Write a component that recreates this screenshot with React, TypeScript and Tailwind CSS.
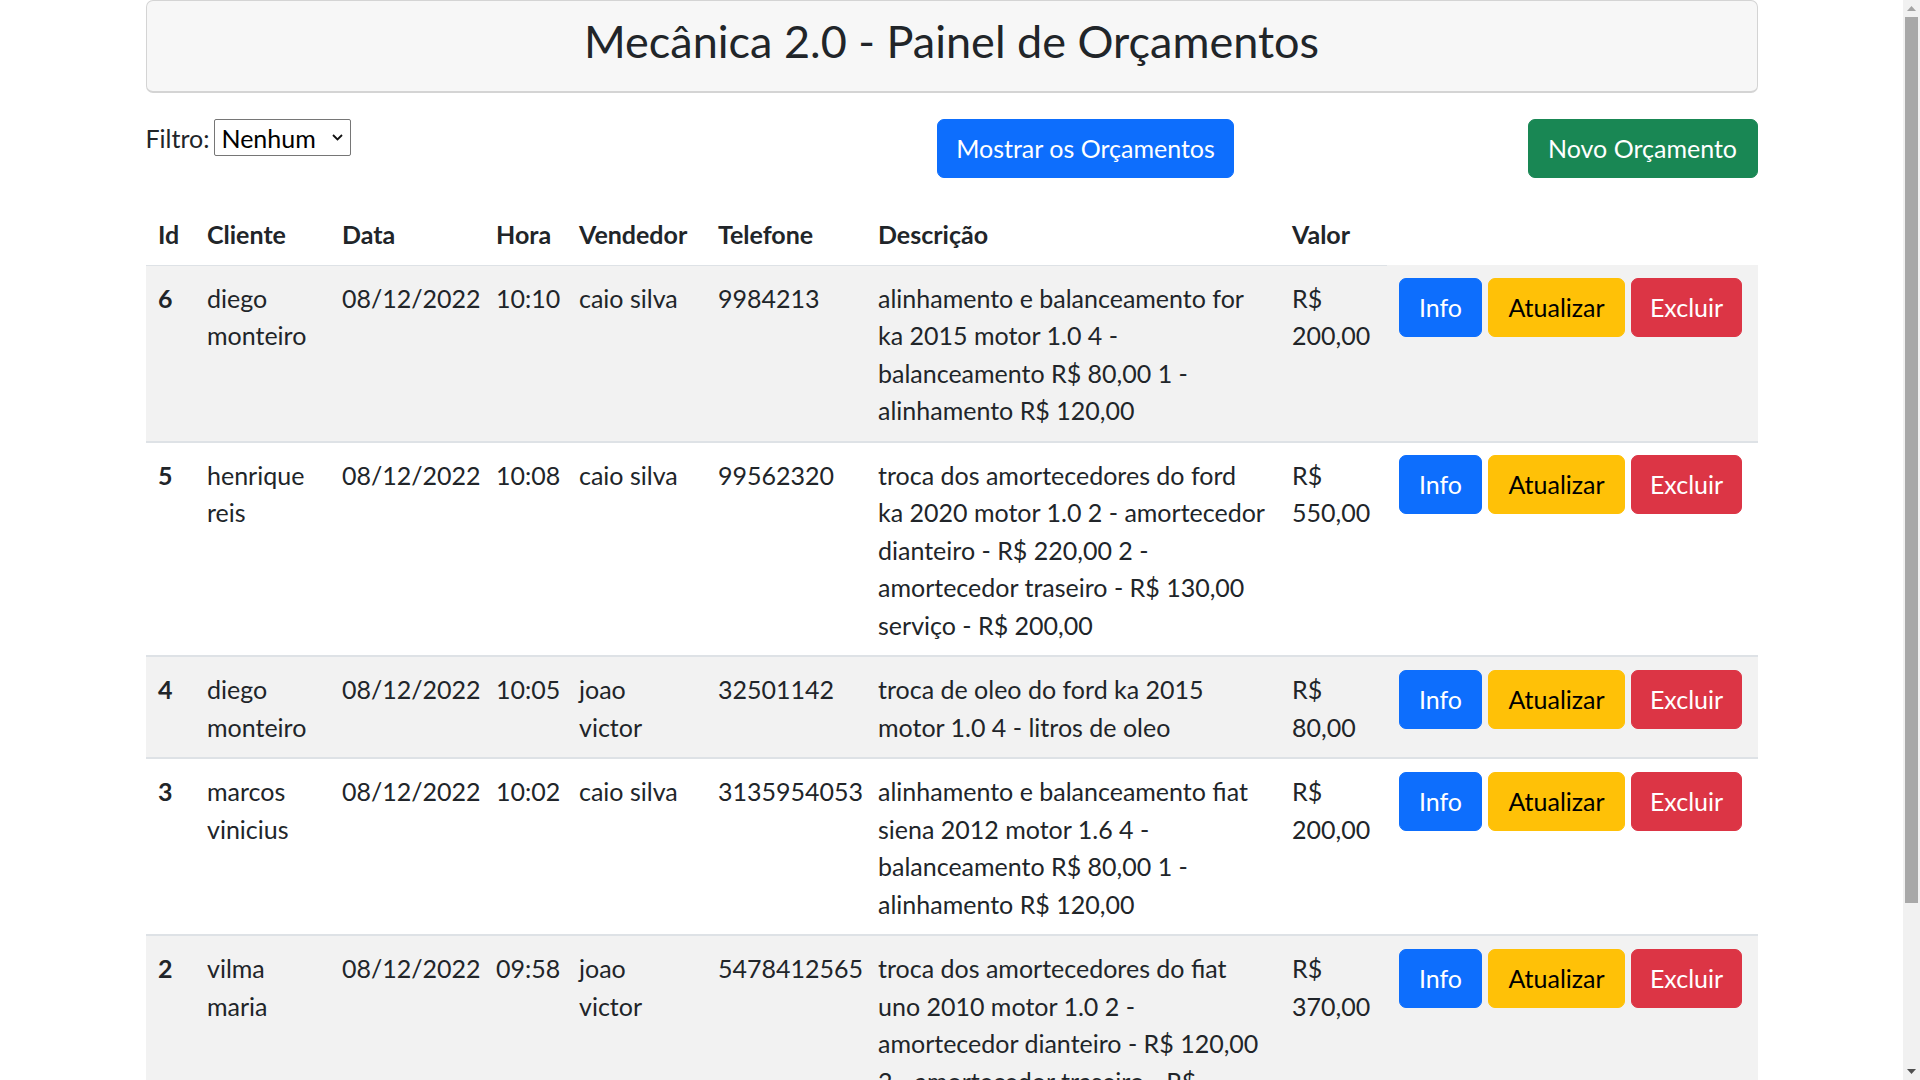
type Orcamento = {
  id: number;
  cliente: string[];
  data: string;
  hora: string;
  vendedor: string[];
  telefone: string;
  descricao: string[];
  valor: string;
};

const orcamentos: Orcamento[] = [
  {
    id: 6,
    cliente: ['diego', 'monteiro'],
    data: '08/12/2022',
    hora: '10:10',
    vendedor: ['caio silva'],
    telefone: '9984213',
    descricao: [
      'alinhamento e balanceamento for',
      'ka 2015 motor 1.0 4 -',
      'balanceamento R$ 80,00 1 -',
      'alinhamento R$ 120,00',
    ],
    valor: '200,00',
  },
  {
    id: 5,
    cliente: ['henrique', 'reis'],
    data: '08/12/2022',
    hora: '10:08',
    vendedor: ['caio silva'],
    telefone: '99562320',
    descricao: [
      'troca dos amortecedores do ford',
      'ka 2020 motor 1.0 2 - amortecedor',
      'dianteiro - R$ 220,00 2 -',
      'amortecedor traseiro - R$ 130,00',
      'serviço - R$ 200,00',
    ],
    valor: '550,00',
  },
  {
    id: 4,
    cliente: ['diego', 'monteiro'],
    data: '08/12/2022',
    hora: '10:05',
    vendedor: ['joao', 'victor'],
    telefone: '32501142',
    descricao: ['troca de oleo do ford ka 2015', 'motor 1.0 4 - litros de oleo'],
    valor: '80,00',
  },
  {
    id: 3,
    cliente: ['marcos', 'vinicius'],
    data: '08/12/2022',
    hora: '10:02',
    vendedor: ['caio silva'],
    telefone: '3135954053',
    descricao: [
      'alinhamento e balanceamento fiat',
      'siena 2012 motor 1.6 4 -',
      'balanceamento R$ 80,00 1 -',
      'alinhamento R$ 120,00',
    ],
    valor: '200,00',
  },
  {
    id: 2,
    cliente: ['vilma', 'maria'],
    data: '08/12/2022',
    hora: '09:58',
    vendedor: ['joao', 'victor'],
    telefone: '5478412565',
    descricao: [
      'troca dos amortecedores do fiat',
      'uno 2010 motor 1.0 2 -',
      'amortecedor dianteiro - R$ 120,00',
      '2 - amortecedor traseiro - R$',
      '100,00 serviço - R$ 150,00',
    ],
    valor: '370,00',
  },
  {
    id: 1,
    cliente: ['ana', 'souza'],
    data: '08/12/2022',
    hora: '09:51',
    vendedor: ['caio silva'],
    telefone: '988776655',
    descricao: ['troca de pastilhas de freio do', 'gol 2018 - R$ 150,00'],
    valor: '150,00',
  },
];

const headers = ['Id', 'Cliente', 'Data', 'Hora', 'Vendedor', 'Telefone', 'Descrição', 'Valor'];

// text cells sit a little lower than the buttons, as in the original font
const cell = 'border-b-2 border-[#dee2e6] px-[12.5px] pt-[14px] pb-[11px] align-top';

function Lines({ lines }: { lines: string[] }) {
  return (
    <>
      {lines.map((line, i) => (
        <div key={i} className="whitespace-nowrap">
          {line}
        </div>
      ))}
    </>
  );
}

function Scrollbar() {
  return (
    <div className="flex h-screen w-[17px] shrink-0 flex-col bg-[#f1f1f1]">
      <div className="flex h-[17px] items-center justify-center">
        <svg width="9" height="5" viewBox="0 0 9 5">
          <path d="M0 5L4.5 0L9 5Z" fill="#a3a3a3" />
        </svg>
      </div>
      <div className="flex-1">
        <div className="mx-[2px] h-[886px] bg-[#a8a8a8]" />
      </div>
      <div className="flex h-[17px] items-center justify-center">
        <svg width="9" height="5" viewBox="0 0 9 5">
          <path d="M0 0L4.5 5L9 0Z" fill="#505050" />
        </svg>
      </div>
    </div>
  );
}

export default function App() {
  return (
    <div className="flex h-screen overflow-hidden bg-white font-[Lato,sans-serif] text-[25px] leading-[37.5px] text-[#212529]">
      <main className="h-screen flex-1 overflow-y-auto [scrollbar-width:none]">
        <div className="mx-auto w-[1612px] pb-[25px]">
          {/* Cabeçalho */}
          <header className="rounded-[7px] border border-b-2 border-[#d4d4d4] bg-[#f7f7f7] pt-[10px] pb-[20px] text-center">
            <h2 className="text-[45px] font-normal leading-[60px]">Mecânica 2.0 - Painel de Orçamentos</h2>
          </header>

          {/* Filtro e ações */}
          <div className="mt-[26px] flex items-start justify-between">
            <div className="flex w-[498px] items-start gap-[5px]">
              <label htmlFor="filtro" className="pt-[1px]">
                Filtro:
              </label>
              <div className="relative">
                <select
                  id="filtro"
                  className="h-[37px] w-[137px] appearance-none rounded-[2px] border border-[#767676] bg-white pl-[6px] text-[25px] leading-[normal] text-black"
                >
                  <option>Nenhum</option>
                </select>
                <svg
                  className="pointer-events-none absolute right-[8px] top-[15px]"
                  width="11"
                  height="7"
                  viewBox="0 0 11 7"
                  fill="none"
                >
                  <path d="M1 1l4.5 4.5L10 1" stroke="#111" strokeWidth="1.8" />
                </svg>
              </div>
            </div>
            <button className="flex h-[59px] w-[297px] items-center justify-center rounded-[7px] border border-[#0d6efd] bg-[#0d6efd] pt-[1px] text-white">
              Mostrar os Orçamentos
            </button>
            <button className="flex h-[59px] w-[230px] items-center justify-center rounded-[7px] border border-[#198754] bg-[#198754] pt-[1px] text-white">
              Novo Orçamento
            </button>
          </div>

          {/* Tabela */}
          <table className="mt-[24px] w-full table-fixed border-collapse">
            <colgroup>
              <col className="w-[49px]" />
              <col className="w-[135px]" />
              <col className="w-[154px]" />
              <col className="w-[83px]" />
              <col className="w-[139px]" />
              <col className="w-[160px]" />
              <col className="w-[414px]" />
              <col className="w-[107px]" />
              <col className="w-[371px]" />
            </colgroup>
            <thead>
              <tr>
                {headers.map((h) => (
                  <th
                    key={h}
                    className="border-b border-[#dee2e6] px-[12.5px] pt-[14px] pb-[11px] text-left align-bottom font-bold"
                  >
                    {h}
                  </th>
                ))}
              </tr>
            </thead>
            <tbody>
              {orcamentos.map((o, index) => (
                <tr key={o.id} className={index % 2 === 0 ? 'bg-[#f2f2f2]' : 'bg-white'}>
                  <td className={`${cell} font-bold`}>{o.id}</td>
                  <td className={cell}>
                    <Lines lines={o.cliente} />
                  </td>
                  <td className={cell}>{o.data}</td>
                  <td className={cell}>{o.hora}</td>
                  <td className={cell}>
                    <Lines lines={o.vendedor} />
                  </td>
                  <td className={`${cell} whitespace-nowrap`}>{o.telefone}</td>
                  <td className={cell}>
                    <Lines lines={o.descricao} />
                  </td>
                  <td className={cell}>
                    <div>R$</div>
                    <div>{o.valor}</div>
                  </td>
                  <td className="border-b-2 border-[#dee2e6] p-[12.5px] align-top">
                    <div className="flex gap-[6px]">
                      <button className="flex h-[59px] w-[83px] items-center justify-center rounded-[7px] border border-[#0d6efd] bg-[#0d6efd] pt-[1px] text-white">
                        Info
                      </button>
                      <button className="flex h-[59px] w-[137px] items-center justify-center rounded-[7px] border border-[#ffc107] bg-[#ffc107] pt-[1px] text-black">
                        Atualizar
                      </button>
                      <button className="flex h-[59px] w-[111px] items-center justify-center rounded-[7px] border border-[#dc3545] bg-[#dc3545] pt-[1px] text-white">
                        Excluir
                      </button>
                    </div>
                  </td>
                </tr>
              ))}
            </tbody>
          </table>
        </div>
      </main>
      <Scrollbar />
    </div>
  );
}
